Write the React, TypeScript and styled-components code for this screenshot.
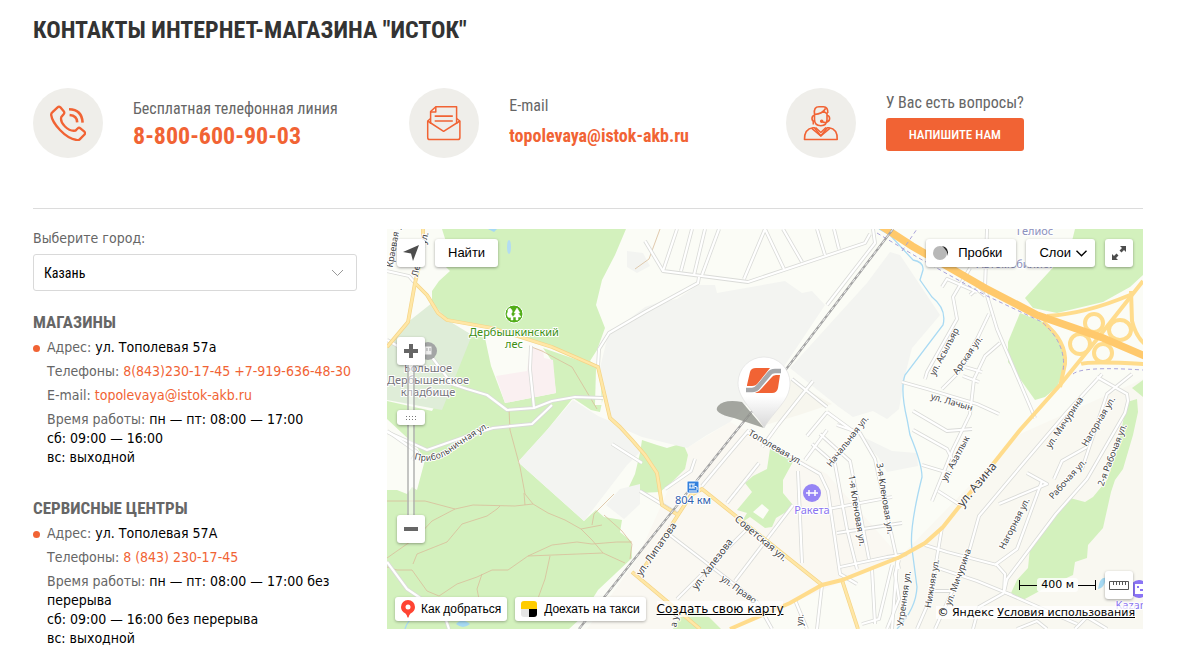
import React from "react";
import styled, { createGlobalStyle, css } from "styled-components";

const orange = "#f16334";
const condensed = `"Roboto Condensed", Roboto, "Liberation Sans", sans-serif`;
const tahoma = `Tahoma, "DejaVu Sans Condensed", "DejaVu Sans", sans-serif`;
const arial = `"Liberation Sans", Arial, sans-serif`;
const verdana = `Verdana, "DejaVu Sans", sans-serif`;

const GlobalStyle = createGlobalStyle`
  *, *::before, *::after { box-sizing: border-box; }
  body { margin: 0; background: #fff; color: #000; font: 14px/19px ${tahoma}; }
  a { color: ${orange}; text-decoration: none; }
  button { font: inherit; cursor: pointer; }
`;

/* ---------- page ---------- */

const Page = styled.main`
  padding: 14px 40px 12px 33px;
`;

const Title = styled.h1`
  margin: 0 0 42px;
  color: #333;
  font: 700 24px/32px ${condensed};
  text-transform: uppercase;
`;

const Channels = styled.section`
  display: grid;
  grid-template-columns: repeat(3, minmax(0, 1fr));
  column-gap: 19px;
  padding-bottom: 50px;
  border-bottom: 1px solid #dcdcdc;
`;

const Channel = styled.div`
  display: flex;
  align-items: center;
  gap: 30px;
`;

const Disc = styled.span`
  display: flex;
  flex: none;
  align-items: center;
  justify-content: center;
  width: 70px;
  height: 70px;
  border-radius: 50%;
  background: #efeeea;
  color: ${orange};
`;

const ChannelText = styled.div<{ $gap: number; $raised?: boolean }>`
  display: flex;
  flex-direction: column;
  align-items: flex-start;
  gap: ${(p) => p.$gap}px;
  padding-bottom: ${(p) => (p.$raised ? 4 : 0)}px;
`;

const ChannelLabel = styled.span`
  color: #666;
  font: 400 16px/24px ${condensed};
`;

const PhoneLink = styled.a`
  font: 700 24px/28px ${condensed};
`;

const MailLink = styled.a`
  font: 700 18px/24px ${condensed};
`;

const WriteButton = styled.button`
  padding: 0 23px;
  border: 0;
  border-radius: 3px;
  background: ${orange};
  color: #fff;
  font: 500 13px/33px ${condensed};
  text-transform: uppercase;
`;

const Columns = styled.div`
  display: grid;
  grid-template-columns: 324px minmax(0, 1fr);
  align-items: start;
  column-gap: 30px;
  padding-top: 20px;
`;

/* ---------- side column ---------- */

const CityLabel = styled.label`
  display: block;
  margin-bottom: 6px;
  color: #666;
`;

const SelectBox = styled.div`
  position: relative;
  margin-bottom: 19px;
  color: #999;
`;

const CitySelect = styled.select`
  display: block;
  width: 100%;
  height: 37px;
  padding: 0 36px 0 10px;
  border: 1px solid #d9d9d9;
  border-radius: 3px;
  background: #fff;
  color: #000;
  font: 400 14px/20px ${condensed};
  appearance: none;
`;

const SelectArrow = styled.svg`
  position: absolute;
  top: 15px;
  right: 13px;
  pointer-events: none;
`;

const Group = styled.section`
  & + & { margin-top: 29px; }
`;

const GroupTitle = styled.h2`
  margin: 0 0 4px;
  color: #666;
  font: 700 17px/24px ${condensed};
  text-transform: uppercase;
`;

const Details = styled.ul`
  display: flex;
  flex-direction: column;
  gap: 5px;
  margin: 0;
  padding: 0;
  list-style: none;
`;

const Detail = styled.li<{ $dot?: boolean }>`
  position: relative;
  padding-left: 14px;

  ${(p) =>
    p.$dot &&
    css`
      &::before {
        content: "";
        position: absolute;
        top: 7px;
        left: 0;
        width: 7px;
        height: 7px;
        border-radius: 50%;
        background: ${orange};
      }
    `}
`;

const Key = styled.span`
  color: #666;
`;

/* ---------- map ---------- */

const MapBox = styled.section`
  position: relative;
  height: 400px;
  overflow: hidden;
  background: #fbfcf6;
`;

const MapDrawing = styled.svg`
  display: block;
  width: 100%;
  height: 100%;
  font-family: "Noto Sans", "Open Sans", sans-serif;
`;

const Bar = styled.div<{ $side: "topLeft" | "topRight" | "bottomLeft" }>`
  position: absolute;
  display: flex;
  ${(p) => p.$side === "topLeft" && "top: 10px; left: 10px; gap: 10px;"}
  ${(p) => p.$side === "topRight" && "top: 10px; right: 10px; gap: 10px;"}
  ${(p) => p.$side === "bottomLeft" && "bottom: 8px; left: 8px; gap: 8px;"}
`;

const MapButton = styled.button<{ $icon?: boolean; $gap?: number; $padding?: string }>`
  display: flex;
  align-items: center;
  justify-content: center;
  gap: ${(p) => p.$gap ?? 0}px;
  width: ${(p) => (p.$icon ? "28px" : "auto")};
  height: 28px;
  padding: ${(p) => (p.$icon ? "0" : p.$padding ?? "0 13px")};
  border: 0;
  border-radius: 3px;
  background: #fff;
  box-shadow: 0 1px 3px rgba(0, 0, 0, 0.35);
  color: #000;
  font: 400 13px/28px ${arial};
  white-space: nowrap;
`;

const LinkButton = styled.a`
  display: flex;
  align-items: center;
  gap: 6px;
  height: 24px;
  padding: 0 6px;
  border-radius: 3px;
  background: #fff;
  box-shadow: 0 1px 3px rgba(0, 0, 0, 0.3);
  color: #000;
  font: 400 12px/24px ${arial};
  white-space: nowrap;
`;

const MapLink = styled.a`
  align-self: center;
  margin-left: 3px;
  background: rgba(255, 255, 255, 0.7);
  color: #000;
  font: 400 12px/16px ${verdana};
  text-decoration: underline;
  white-space: nowrap;
`;

const Zoom = styled.div`
  position: absolute;
  top: 108px;
  left: 10px;
  display: flex;
  flex-direction: column;
  align-items: center;
`;

const Track = styled.div`
  display: flex;
  align-items: center;
  justify-content: center;
  width: 8px;
  height: 150px;
  padding-bottom: 45px;
  border: solid rgba(140, 140, 140, 0.5);
  border-width: 0 2px;
  background: rgba(255, 255, 255, 0.5);
`;

const Knob = styled.button`
  flex: none;
  display: flex;
  align-items: center;
  justify-content: center;
  width: 28px;
  height: 15px;
  padding: 0;
  border: 0;
  border-radius: 3px;
  background: #fff;
  box-shadow: 0 1px 3px rgba(0, 0, 0, 0.35);
`;

const Corner = styled.div`
  position: absolute;
  right: 7px;
  bottom: 10px;
  display: flex;
  flex-direction: column;
  align-items: flex-end;
`;

const ScaleRow = styled.div`
  display: flex;
  align-items: center;
  gap: 9px;
  padding-right: 3px;
`;

const Scale = styled.div`
  display: flex;
  align-items: center;
  color: #000;
  font: 400 11px/14px ${verdana};

  span {
    padding: 0 4px;
    border-radius: 3px;
    background: rgba(255, 255, 255, 0.8);
  }
`;

const Copyright = styled.div`
  margin-top: 7px;
  padding: 0 1px;
  background: rgba(255, 255, 255, 0.75);
  color: #000;
  font: 400 11px/13px ${verdana};
  white-space: nowrap;

  a { color: #000; text-decoration: underline; }
`;

/* ---------- icons ---------- */

const PhoneIcon = () => (
  <svg width="36" height="36" viewBox="0 0 36 36" fill="none" stroke="currentColor" strokeWidth="2.300" strokeLinejoin="round" aria-hidden="true">
    <path d="M2.5 7.200 L7.600 2.300 Q9 1 10.400 2.300 L13.700 6.200 Q14.900 7.700 13.600 9.200 L11.300 12 Q10 17 15 21.500 Q20 26.500 25.500 25.600 L27.600 23.500 Q29 22.200 30.400 23.400 L34.400 26.700 Q35.700 28 34.500 29.500 L29.700 34.400 Q28.500 35.500 26.500 35 Q18 33.500 10 25 Q2 16.500 1.200 10 Q1 8.500 2.500 7.200 Z" />
    <path d="M19 4.200 Q32 4.500 32.600 17.600" strokeWidth="2.600" />
    <path d="M19.600 10 Q27 10.500 27.200 17.400" strokeWidth="2.600" />
  </svg>
);

const MailIcon = () => (
  <svg width="36" height="36" viewBox="0 0 36 36" fill="none" stroke="currentColor" strokeWidth="1.500" strokeLinejoin="round" aria-hidden="true">
    <path d="M4.600 19 V6.500 L9.800 1.700 H30.600 V19" />
    <path d="M4.600 7 H9.800 V1.700" />
    <path d="M4.600 13.500 L1.700 16 V32.500 Q1.700 34.600 3.800 34.600 H31.800 Q33.900 34.600 33.900 32.500 V16 L30.600 13.500" />
    <path d="M1.700 16 L17.600 26.300 L33.900 16" />
    <path d="M8.700 11.200 H26.800 M8.700 16 H26.800" strokeWidth="1.700" />
  </svg>
);

const OperatorIcon = () => (
  <svg width="36" height="36" viewBox="0 0 36 36" fill="none" stroke="currentColor" strokeWidth="1.600" strokeLinejoin="round" aria-hidden="true">
    <path d="M11.500 9 V14.500 Q11.500 20.500 17.800 20.800 Q24 20.500 24 14.500 V8" />
    <path d="M11.500 9 Q10.500 1.700 16 1.700 H20.500 Q25.200 2 24.800 8 M11.500 9.500 Q19.500 9 22.500 3.500 M20 6 L24 8.700" />
    <path d="M11.500 10.500 Q9 10.500 9 13.500 Q9 16.200 11.500 16.200 M24 10.500 Q26.600 10.500 26.600 13.500 Q26.600 16.200 24 16.200 M10.300 16.500 V19.500" />
    <path d="M26 15.500 Q24.500 18.500 19.500 17" />
    <circle cx="18.700" cy="16.300" r="1" fill="currentColor" />
    <path d="M1.500 34.500 Q1.300 24 10 22.800 H11.500 L17.800 31 L24.200 22.800 H26 Q34.700 24 34.200 34.500 Z" />
    <path d="M8.800 23.300 L17.800 31 M12.500 22.500 L17.800 27.500 L23 22.500 M26.800 23.300 L17.800 31" />
  </svg>
);

/* ---------- map data ---------- */

const parks = [
  "55,0 60,16 51,30 63,42 52,52 45,62 45,74 62,92 105,100 165,119 211,138 203,132 210,121 218,99 209,76 215,51 228,26 239,0",
  "85,106 98,109 104,137 118,174 169,164 165,132 156,119 211,138 216,169 213,183 204,181 186,169 160,201 131,233 197,292 209,281 217,288 235,291 233,303 244,312 245,329 211,361 206,369 206,378 182,400 0,400 0,261 10,261 20,265 25,258 30,261 38,231 30,218 0,190 0,172 45,182",
  "688,0 683,20 638,69 646,79 670,84 716,73 743,58 756,46 756,0",
  "633,84 621,113 621,133 648,171 658,168 670,158 676,143 676,116 666,101 656,93",
  "756,151 745,159 756,168",
  "740,173 750,170 751,183 746,206 736,240 728,251 724,263 716,299 701,316 700,329 688,333 686,346 660,358 636,371 624,364 630,351 641,339 643,319 683,269 698,273 706,268 720,251 730,222",
  "255,211 270,216 280,219 296,214 301,226 298,240 286,252 273,263 253,264 240,262 248,245 253,224",
  "383,220 395,224 408,229 396,251 396,264 406,276 399,283 389,289 385,298 378,299 363,288 354,294 360,284 350,281 365,263 358,254 366,247 380,240",
  "286,400 292,389 310,381 322,388 334,400",
];

const cleared = ["366,283 375,275 382,281 376,290", "209,140 213,139 215,176 208,176"];

const industry = [
  "131,233 160,201 186,171 211,187 223,192 250,215 253,223 240,236 197,292",
  "258,78 270,74 290,70 311,56 328,56 330,64 398,52 415,64 425,62 438,76 396,139 343,193 320,206 300,219 255,208 232,198 223,189 213,139 221,106",
  "503,23 513,26 553,86 525,119 518,146 515,163 512,180 500,190 486,182 466,188 452,178 403,139 480,54",
  "530,224 531,237 500,243 491,228 470,205 505,222",
  "240,22 256,24 263,37 250,44 240,38",
  "233,260 253,255 253,275 237,290 219,276",
];

const casedStreets = [
  "0,42 22,47 28,54", "35,115 50,135 65,155 80,160 100,166 120,181 147,179 165,172 188,168 216,169",
  "144,117 143,140 147,179", "0,111 16,120", "165,176 145,195 106,199 80,207 40,221 0,203",
  "211,138 212,120 222,104 258,83 311,54 312,48",
  "290,0 276,42 361,53 478,14 483,5", "276,42 258,12", "305,0 294,42 M318,0 307,46 M332,0 315,46",
  "378,0 357,50 M378,0 397,40 M396,0 415,33 M430,0 438,26 M447,0 452,20",
  "486,0 488,14 440,76", "405,150 440,178 M426,152 391,196 375,218 M440,183 420,207 M440,183 470,205",
  "0,202 30,223 25,231", "372,234 340,274", "362,201 340,227 315,257",
  "406,276 348,352", "360,300 290,370",
  "283,306 330,342 370,373 385,400",
  "411,242 415,334 M360,203 433,245 441,262 453,345 470,355",
  "440,201 418,231 M450,196 473,204 488,230 512,340", "425,215 448,235 460,300 470,340 M433,205 463,232 482,330",
  "441,280 505,268 M450,304 515,294 M453,338 500,328 520,325",
  "253,262 291,285 M278,260 304,242 308,230", "255,234 225,215 M0,333 20,360 57,385 62,400",
  "435,356 430,400 M408,371 420,400 M485,340 488,395 M505,336 492,390 475,395 M510,333 505,400",
  "512,331 508,345 512,370 500,400 M583,39 566,68 570,90 540,143 538,150 M515,153 540,160 590,175 612,185",
  "600,0 598,60 610,100 648,189", "598,67 590,60 583,66 M555,58 560,50 590,63 M613,114 598,127 587,150 583,185 566,220 545,272",
  "526,182 560,202 585,200 M602,85 590,110 570,145 555,160 M578,138 595,143 M576,147 592,153",
  "526,201 560,220 565,230 M535,236 565,245 M551,262 573,276", "715,145 680,183 640,230 592,287 580,330 548,400",
  "640,244 660,255 612,275 M710,148 740,165 741,172 738,184 700,250 669,285 620,350 617,363 625,366",
  "745,145 720,165 695,240 M667,250 675,232 700,218 M655,252 630,320 608,336",
  "538,316 560,323 610,336 618,345 617,363 690,395 M548,338 590,352 617,363 M555,298 543,370 530,400 M543,362 565,362",
  "617,364 592,378 586,400 M630,400 650,392 660,400 M720,400 700,388 688,400",
];

const yellowRoads = [
  "36,0 36,22 28,54 21,93 0,118", "28,54 40,66 51,84 60,91 105,99 165,118 211,138 223,189 233,198 245,211 258,226 270,244 275,276 291,286 253,345",
  "435,356 315,260 304,266 291,286", "245,343 270,364 313,400", "455,351 471,400",
];

const mainRoads = [
  "343,400 403,374 435,356 455,351 513,328 538,314 556,298 633,201 673,156 703,119 756,52",
  "660,87 Q698,85 743,66", "656,93 Q680,112 678,135 L673,158", "744,62 745,92 Q749,108 758,115", "694,135 Q702,132 758,135",
];

const forestPaths = [
  "0,272 38,272 68,280 86,276 128,277 146,275 161,284 178,291 194,300 215,296", "123,201 133,238 138,265 146,275", "137,264 138,276",
  "0,329 30,308 45,292 68,280", "26,335 30,325 60,313 75,295 100,287 110,280 113,277", "0,338 10,341 25,341 40,362 52,367 70,355 90,348 105,341 121,341 141,327 165,316 190,313 205,315 230,313 245,313",
  "141,327 216,324 238,334", "194,300 205,311 216,324", "205,296 207,285 227,265", "163,327 158,350 150,372", "95,345 90,360 93,375", "217,286 235,302 245,315 243,330",
  "142,117 155,122 185,138 210,180", "123,201 122,180", "273,0 262,30 248,40",
];

type Label = [text: string, x: number, y: number, angle: number, size?: number];
const streetLabels: Label[] = [
  ["Краевая ул.", 10, 14, -80], ["Лесная ул.", 36, 26, -76], ["Начальная ул.", 463, 214, -52],
  ["Тополевая ул.", 387, 221, 30], ["1-я Кленовая ул.", 467, 282, 81], ["3-я Кленовая ул.", 495, 270, 81],
  ["Советская ул.", 372, 312, 40, 10], ["ул. Халезова", 328, 337, -53, 10], ["ул. Липатова", 272, 322, -55, 10],
  ["ул. Право", 350, 363, 36], ["Утренняя ул.", 520, 370, -82], ["Нижняя ул.", 548, 355, -80],
  ["ул. Мичурина", 574, 349, -70], ["Нагорная ул.", 630, 296, -63], ["Рабочая ул.", 683, 252, -48],
  ["2-я Рабочая ул.", 728, 227, -69], ["ул. Азина", 593, 258, -50, 12], ["ул. Азатлык", 571, 231, -62],
  ["ул. Лачын", 564, 176, 16], ["ул. Асылъяр", 560, 124, -62], ["Арская ул.", 583, 128, -55],
  ["ул. Мичурина", 680, 195, -56], ["Нагорная ул.", 714, 194, -59], ["ул.", 416, 391, -86], ["а ул.", 291, 389, -80],
];

const line = (points: string) => (points.startsWith("M") ? points : `M${points}`);

const MapLayer = () => (
  <MapDrawing viewBox="0 0 756 400" preserveAspectRatio="xMidYMid slice" role="img" aria-label="Карта Казани, ул. Тополевая 57а">
    <defs>
      <path id="hospital-street" d="M27,230 Q46,236 64,223 T108,195" />
      <linearGradient id="pin-tail" x1="0" y1="0" x2="0" y2="1">
        <stop offset="0.550" stopColor="#fff" />
        <stop offset="1" stopColor="#d8d8d8" />
      </linearGradient>
    </defs>
    <rect width="756" height="400" fill="#fbfcf6" />
    <polygon points="300,219 343,193 440,245 513,328 343,400 200,400 250,330" fill="#faf8f2" />
    <polygon points="633,205 756,150 756,400 510,400 513,328" fill="#f9f8f1" />
    {parks.map((p) => <polygon key={p} points={p} fill="#d3f1bd" />)}
    {cleared.map((p) => <polygon key={p} points={p} fill="#fbfcf6" />)}
    <polygon points="45,74 62,92 85,106 55,181 0,171 0,118 21,93" fill="#dfedd8" />
    <polygon points="109,147 140,142 143,118 156,121 157,129 166,131 169,164 118,174" fill="#faf0f1" />
    {industry.map((p) => <polygon key={p} points={p} fill="#f3f4f1" />)}
    <polygon points="398,148 445,175 412,186 372,198 372,176" fill="#f7f6ee" />
    <ellipse cx="122" cy="18" rx="2" ry="7" fill="#b3dcf2" />
    <path d="M101,0 L107,3 L110,0Z M69,395 Q75,388 83,395 Q76,401 69,395Z M711,360 Q713,347 719,349 Q717,360 711,360Z" fill="#a5d9f3" />
    <path d="M492,0 L503,6 L526,31 Q537,33 536,41 L533,51 L545,68 Q560,80 556,96 L518,146 Q513,160 520,190 L523,206 Q535,235 535,248 Q522,300 525,320 L530,358 Q529,380 510,400 M18,400 Q20,392 28,387" fill="none" stroke="#a9daf3" strokeWidth="1.300" />
    <g fill="none" stroke="#d9bd9b" strokeWidth="0.800">
      {forestPaths.map((p) => <path key={p} d={line(p)} />)}
    </g>
    <g fill="none" strokeLinejoin="round">
      {casedStreets.map((p) => <path key={p} d={line(p)} stroke="#dadbd8" strokeWidth="3.800" />)}
      {casedStreets.map((p) => <path key={p} d={line(p)} stroke="#fff" strokeWidth="2.200" />)}
      {yellowRoads.map((p) => <path key={p} d={line(p)} stroke="#f4d488" strokeWidth="3.800" />)}
      {yellowRoads.map((p) => <path key={p} d={line(p)} stroke="#ffe7a6" strokeWidth="2.400" />)}
    </g>
    <g fill="none" stroke="#ffdc8c" strokeWidth="4">
      {mainRoads.map((p) => <path key={p} d={line(p)} />)}
      <circle cx="707" cy="94" r="9" /><ellipse cx="733" cy="101" rx="11" ry="10" />
      <circle cx="693" cy="115" r="10" /><circle cx="716" cy="124" r="9" />
    </g>
    <path d="M493,-4 L525,17 L598,59 L650,86 L716,109 L760,128" fill="none" stroke="#ffc96c" strokeWidth="7.500" />
    <path d="M490,4 L530,28 L598,66 L655,93 Q680,115 676,142 M686,145 Q695,137 756,141 M515,22 L530,0" fill="none" stroke="#aaa4da" strokeWidth="1" strokeDasharray="4 3" />
    <path d="M506,0 L400,139 L346,206 L253,323 L192,400" fill="none" stroke="#a3a3a3" strokeWidth="2.200" />
    <path d="M506,0 L400,139 L346,206 L253,323 L192,400" fill="none" stroke="#f1f1f1" strokeWidth="1" strokeDasharray="4 3" />

    <g fill="#444" stroke="#fff" strokeWidth="2" paintOrder="stroke" strokeLinejoin="round" textAnchor="middle">
      {streetLabels.map(([text, x, y, angle, size = 9]) => (
        <text key={`${text}${x}`} x={x} y={y} fontSize={size} transform={`rotate(${angle} ${x} ${y})`}>{text}</text>
      ))}
      <text fontSize="9" textAnchor="start"><textPath href="#hospital-street">Прибольничная ул.</textPath></text>
      <g fontSize="11">
        <g fill="#3c8f12"><text x="127" y="107">Дербышкинский</text><text x="127" y="119">лес</text></g>
        <g fill="#77757c"><text x="41" y="143">Большое</text><text x="41" y="155">Дербышенское</text><text x="41" y="167">кладбище</text></g>
        <text x="306" y="275" fill="#315fae">804 км</text>
        <text x="425" y="285" fill="#8a74f0">Ракета</text>
        <text x="648" y="6" fill="#8d91bd">Гелиос</text>
        <text x="628" y="39" fill="#8d91bd">Автомобилист</text>
        <text x="744" y="380" fill="#8a74f0">Kazan</text>
      </g>
    </g>

    <circle cx="127" cy="85" r="9" fill="#52ad18" stroke="#fff" />
    <path d="M123,79 Q120,80 121,83 Q119,85 121,88 Q123,89 124,88 V91 H126 V88 L124,85 Q127,82 123,79Z M130,79 L127,84 H129 L126,88 H129 V91 H131 V88 H134 L131,84 H133Z" fill="#fff" stroke="#fff" strokeWidth="0.500" />
    <circle cx="41" cy="122" r="9" fill="#a3a5a5" />
    <path d="M37,117 H45 V126 H37Z M40,119 V122 M43,119 V122" fill="#eee" stroke="#a3a5a5" />
    <rect x="300" y="252" width="12" height="12" rx="1" fill="#3380dd" stroke="#fff" />
    <path d="M302,255 H308 M303,255 V259 M306,255 V259 M302,259 H308 M302,262 H310 M307,257 L310,258 V261" fill="none" stroke="#fff" />
    <circle cx="425" cy="264" r="9" fill="#9685f5" />
    <path d="M419,264 H431 M422,261 V267 M428,261 V267" stroke="#fff" strokeWidth="1.500" />
    <circle cx="752" cy="360" r="9" fill="#8a74f5" />
    <path d="M748,355 H756 V365 H748Z" fill="#fff" /><path d="M750,357 H752 V359 H750Z M753,360 H756 V362 H753Z" fill="#8a74f5" />

    <path d="M377,199 L347,189 Q325,184 331,177 Q337,170 355,173 Z" fill="#8f918b" opacity="0.800" />
    <path d="M377,199 C373,188 351,172 351,154 A26,26 0 0 1 403,154 C403,172 388,180 377,199Z" fill="url(#pin-tail)" stroke="#ddd" strokeWidth="0.600" />
    <path d="M360,156 L363,143 Q364,139 369,139 H383 L371,154 Q369,157 365,157 H360Z M393,146 L391,159 Q390,164 385,164 H368 Q372,163 375,159 L384,149 Q386,146 389,146Z" fill="#f16334" />
    <path d="M359,161 H365 Q369,161 372,157 L382,145 Q384,142 388,142 H394" fill="none" stroke="#a6a8ab" strokeWidth="4.600" />
  </MapDrawing>
);

/* ---------- app ---------- */

export default function App() {
  return (
    <>
      <GlobalStyle />
      <Page>
        <Title>Контакты интернет-магазина "Исток"</Title>
        <Channels>
          <Channel>
            <Disc><PhoneIcon /></Disc>
            <ChannelText $gap={1}>
              <ChannelLabel>Бесплатная телефонная линия</ChannelLabel>
              <PhoneLink href="tel:88006009003">8-800-600-90-03</PhoneLink>
            </ChannelText>
          </Channel>
          <Channel>
            <Disc><MailIcon /></Disc>
            <ChannelText $gap={6} $raised>
              <ChannelLabel>E-mail</ChannelLabel>
              <MailLink href="mailto:topolevaya@istok-akb.ru">topolevaya@istok-akb.ru</MailLink>
            </ChannelText>
          </Channel>
          <Channel>
            <Disc><OperatorIcon /></Disc>
            <ChannelText $gap={3} $raised>
              <ChannelLabel>У Вас есть вопросы?</ChannelLabel>
              <WriteButton type="button">Напишите нам</WriteButton>
            </ChannelText>
          </Channel>
        </Channels>

        <Columns>
          <aside>
            <CityLabel htmlFor="city">Выберите город:</CityLabel>
            <SelectBox>
              <CitySelect id="city" defaultValue="kazan">
                <option value="kazan">Казань</option>
              </CitySelect>
              <SelectArrow width="13" height="8" viewBox="0 0 13 8" fill="none" stroke="currentColor" aria-hidden="true">
                <path d="M1 1 L6.500 6.500 L12 1" />
              </SelectArrow>
            </SelectBox>

            <Group>
              <GroupTitle>Магазины</GroupTitle>
              <Details>
                <Detail $dot><Key>Адрес:</Key> ул. Тополевая 57а</Detail>
                <Detail>
                  <Key>Телефоны:</Key> <a href="tel:88432301745">8(843)230-17-45</a> <a href="tel:+79196364830">+7-919-636-48-30</a>
                </Detail>
                <Detail><Key>E-mail:</Key> <a href="mailto:topolevaya@istok-akb.ru">topolevaya@istok-akb.ru</a></Detail>
                <Detail>
                  <Key>Время работы:</Key> пн — пт: 08:00 — 17:00<br />
                  сб: 09:00 — 16:00<br />
                  вс: выходной
                </Detail>
              </Details>
            </Group>

            <Group>
              <GroupTitle>Сервисные центры</GroupTitle>
              <Details>
                <Detail $dot><Key>Адрес:</Key> ул. Тополевая 57А</Detail>
                <Detail><Key>Телефоны:</Key> <a href="tel:88432301745">8 (843) 230-17-45</a></Detail>
                <Detail>
                  <Key>Время работы:</Key> пн — пт: 08:00 — 17:00 без перерыва<br />
                  сб: 09:00 — 16:00 без перерыва<br />
                  вс: выходной
                </Detail>
              </Details>
            </Group>
          </aside>

          <MapBox>
            <MapLayer />
            <Bar $side="topLeft">
              <MapButton $icon type="button" aria-label="Моё местоположение">
                <svg width="16" height="16" viewBox="0 0 16 16" aria-hidden="true"><path d="M16 0 L0 7 L8 8.500 L10 16Z" fill="#4d4d4d" /></svg>
              </MapButton>
              <MapButton type="button">Найти</MapButton>
            </Bar>
            <Bar $side="topRight">
              <MapButton type="button" $gap={9} $padding="0 14px 0 7px">
                <svg width="16" height="16" viewBox="0 0 16 16" aria-hidden="true">
                  <circle cx="7" cy="8" r="7" fill="#b8b8b8" />
                  <path d="M9 1 Q16 2 15 11 Q14 5 9 1Z" fill="#222" />
                </svg>
                Пробки
              </MapButton>
              <MapButton type="button" $gap={5} $padding="0 8px 0 13px">
                Слои
                <svg width="11" height="7" viewBox="0 0 11 7" fill="none" stroke="#000" strokeWidth="1.400" aria-hidden="true"><path d="M0.500 0.700 L5.500 5.700 L10.500 0.700" /></svg>
              </MapButton>
              <MapButton $icon type="button" aria-label="На весь экран">
                <svg width="16" height="16" viewBox="0 0 16 16" fill="#4d4d4d" aria-hidden="true">
                  <path d="M15 1 V7 L13 5 L10.500 7.500 L8.500 5.500 L11 3 L9 1Z M1 15 V9 L3 11 L5.500 8.500 L7.500 10.500 L5 13 L7 15Z" />
                </svg>
              </MapButton>
            </Bar>
            <Zoom>
              <MapButton $icon type="button" aria-label="Приблизить">
                <svg width="14" height="14" viewBox="0 0 14 14" fill="#666" aria-hidden="true"><path d="M5 0 H9 V5 H14 V9 H9 V14 H5 V9 H0 V5 H5Z" /></svg>
              </MapButton>
              <Track>
                <Knob type="button" aria-label="Масштаб">
                  <svg width="11" height="4" viewBox="0 0 11 4" fill="#777" aria-hidden="true"><path d="M0 0h1v1H0zM3 0h1v1H3zM6 0h1v1H6zM9 0h1v1H9zM0 3h1v1H0zM3 3h1v1H3zM6 3h1v1H6zM9 3h1v1H9z" /></svg>
                </Knob>
              </Track>
              <MapButton $icon type="button" aria-label="Отдалить">
                <svg width="14" height="4" viewBox="0 0 14 4" fill="#666" aria-hidden="true"><path d="M0 0 H14 V4 H0Z" /></svg>
              </MapButton>
            </Zoom>
            <Bar $side="bottomLeft">
              <LinkButton href="#route">
                <svg width="14" height="18" viewBox="0 0 14 18" aria-hidden="true">
                  <path d="M7 0 A7 7 0 0 1 14 7 Q14 11 9.500 13.500 Q8 15 7.500 17.500 H6.500 Q6 15 4.500 13.500 Q0 11 0 7 A7 7 0 0 1 7 0Z" fill="#ff4433" />
                  <circle cx="7" cy="7" r="2.500" fill="#fff" />
                </svg>
                Как добраться
              </LinkButton>
              <LinkButton href="#taxi">
                <svg width="17" height="16" viewBox="0 0 17 16" aria-hidden="true">
                  <path d="M3 0 H13 Q16 0 16 3 V8 H0 V3 Q0 0 3 0Z" fill="#fc0" />
                  <path d="M0 8 H8 V16 H3 Q0 16 0 13Z" fill="#e5e5e5" />
                  <path d="M8 8 H16 V13 Q16 16 13 16 H8Z" fill="#000" />
                </svg>
                Доехать на такси
              </LinkButton>
              <MapLink href="#create">Создать свою карту</MapLink>
            </Bar>
            <Corner>
              <ScaleRow>
                <Scale>
                  <svg width="18" height="10" viewBox="0 0 18 10" fill="none" stroke="#000" aria-hidden="true"><path d="M0.500 0 V10 M0 5.500 H18" /></svg>
                  <span>400 м</span>
                  <svg width="18" height="10" viewBox="0 0 18 10" fill="none" stroke="#000" aria-hidden="true"><path d="M17.500 0 V10 M0 5.500 H18" /></svg>
                </Scale>
                <MapButton $icon type="button" aria-label="Измерить расстояние">
                  <svg width="20" height="9" viewBox="0 0 20 9" fill="none" stroke="#555" aria-hidden="true"><path d="M0.500 0.500 H19.500 V8.500 H0.500Z M4.500 1 V4 M7.500 1 V4 M10.500 1 V4 M13.500 1 V4 M16.500 1 V4" /></svg>
                </MapButton>
              </ScaleRow>
              <Copyright>© Яндекс <a href="#terms">Условия использования</a></Copyright>
            </Corner>
          </MapBox>
        </Columns>
      </Page>
    </>
  );
}
